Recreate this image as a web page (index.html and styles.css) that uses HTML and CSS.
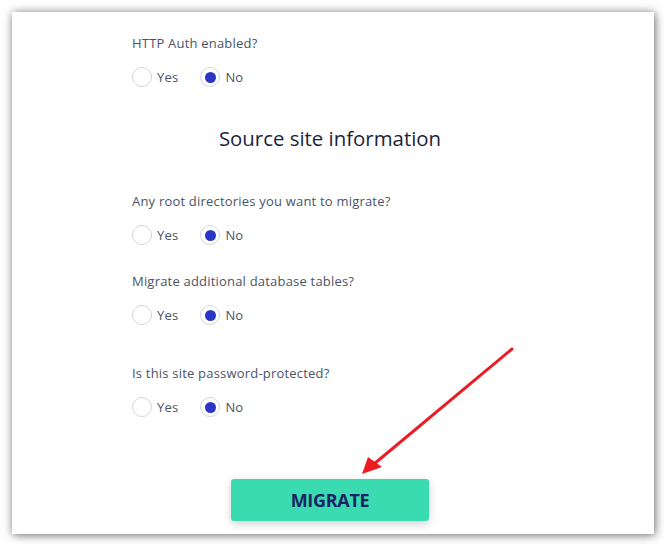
FILE: index.html
```html
<!DOCTYPE html>
<html>
<head>
<meta charset="utf-8">
<link rel="stylesheet" href="styles.css">
</head>
<body>
<div class="panel">
  <div class="column">
    <div class="field field-first">
      <div class="label">HTTP Auth enabled?</div>
      <div class="options">
        <span class="option"><span class="radio"></span><span class="opt-text">Yes</span></span>
        <span class="option"><span class="radio checked"></span><span class="opt-text">No</span></span>
      </div>
    </div>
    <h2 class="title">Source site information</h2>
    <div class="field field-a">
      <div class="label">Any root directories you want to migrate?</div>
      <div class="options">
        <span class="option"><span class="radio"></span><span class="opt-text">Yes</span></span>
        <span class="option"><span class="radio checked"></span><span class="opt-text">No</span></span>
      </div>
    </div>
    <div class="field field-b">
      <div class="label">Migrate additional database tables?</div>
      <div class="options">
        <span class="option"><span class="radio"></span><span class="opt-text">Yes</span></span>
        <span class="option"><span class="radio checked"></span><span class="opt-text">No</span></span>
      </div>
    </div>
    <div class="field field-c">
      <div class="label">Is this site password-protected?</div>
      <div class="options">
        <span class="option"><span class="radio"></span><span class="opt-text">Yes</span></span>
        <span class="option"><span class="radio checked"></span><span class="opt-text">No</span></span>
      </div>
    </div>
    <div class="actions">
      <button class="migrate">MIGRATE</button>
    </div>
  </div>
</div>
<svg class="annotation" width="667" height="547" viewBox="0 0 667 547">
  <line x1="512" y1="349" x2="374" y2="464" stroke="#ec1c24" stroke-width="3" stroke-linecap="round"/>
  <polygon points="362,474 368,457 382,467" fill="#ec1c24"/>
</svg>
</body>
</html>
```

FILE: styles.css
```css
html, body {
  margin: 0;
  padding: 0;
  background: #ffffff;
}
body {
  width: 667px;
  height: 547px;
  overflow: hidden;
  position: relative;
  font-family: "Open Sans", "Liberation Sans", sans-serif;
}
.panel {
  margin: 12px 0 0 12px;
  width: 642px;
  height: 522px;
  background: #fff;
  box-shadow: 1px 1px 9px rgba(0, 0, 0, 0.6);
  padding-left: 120px;
  box-sizing: border-box;
}
.column {
  width: 396px;
  display: flex;
  flex-direction: column;
  padding-top: 21px;
}
.field {
  display: flex;
  flex-direction: column;
  gap: 14px;
}
.label {
  font-size: 13px;
  letter-spacing: 0.2px;
  line-height: 20px;
  color: #4a5466;
}
.options {
  display: flex;
  gap: 22px;
  height: 20px;
  align-items: center;
}
.option {
  display: flex;
  align-items: center;
  gap: 5px;
}
.radio {
  width: 18px;
  height: 18px;
  border: 1px solid #d4d6da;
  border-radius: 50%;
  display: flex;
  align-items: center;
  justify-content: center;
  background: #fff;
}
.radio.checked::after {
  content: "";
  width: 11px;
  height: 11px;
  border-radius: 50%;
  background: #2b35c4;
}
.opt-text {
  font-size: 13px;
  letter-spacing: 0.2px;
  color: #4a5466;
  line-height: 20px;
}
.title {
  margin: 37px 0 0 0;
  text-align: center;
  font-weight: 400;
  font-size: 20.4px;
  line-height: 28px;
  color: #1b1f3b;
}
.field-a { margin-top: 39px; }
.field-b { margin-top: 26px; }
.field-c { margin-top: 38px; }
.actions {
  margin-top: 62px;
  display: flex;
  justify-content: center;
}
.migrate {
  width: 198px;
  height: 42px;
  border: none;
  border-radius: 3px;
  background: #3adbb1;
  color: #1d2264;
  font-family: "Open Sans", "Liberation Sans", sans-serif;
  font-weight: 700;
  font-size: 18px;
  letter-spacing: -0.3px;
  box-shadow: 0 3px 8px rgba(0, 0, 0, 0.18);
  padding: 0;
}
.annotation {
  position: absolute;
  left: 0;
  top: 0;
  pointer-events: none;
}
```
